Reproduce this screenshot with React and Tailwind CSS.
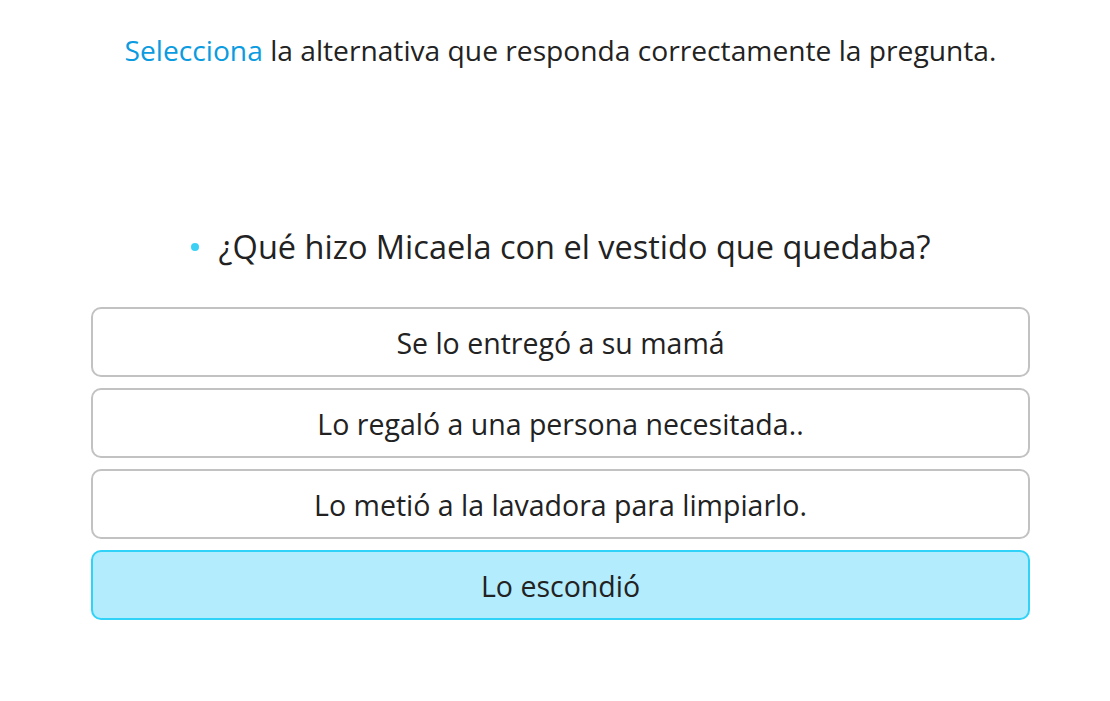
const options = [
  { text: 'Se lo entregó a su mamá', selected: false },
  { text: 'Lo regaló a una persona necesitada..', selected: false },
  { text: 'Lo metió a la lavadora para limpiarlo.', selected: false },
  { text: 'Lo escondió', selected: true },
];

export default function App() {
  return (
    <div className="min-h-[701px] bg-white pl-[91px] pr-[80px] pt-[30px] text-[#222]" style={{ fontFamily: '"Open Sans", "Noto Sans", sans-serif' }}>
      <p className="text-center text-[28.2px] leading-[40px]">
        <span className="text-[#0a9be0]">Selecciona</span> la alternativa que responda correctamente la pregunta.
      </p>

      <div className="mt-[155px] flex items-center justify-center gap-[20px]">
        <span className="h-[8px] w-[8px] rounded-full bg-[#3dd0f5]"></span>
        <h2 className="text-[32.5px] leading-[44px]">¿Qué hizo Micaela con el vestido que quedaba?</h2>
      </div>

      <div className="mt-[38px] flex flex-col gap-[11px]">
        {options.map((o) => (
          <button
            key={o.text}
            className={`flex h-[70px] w-full items-center justify-center rounded-[10px] pt-[2px] text-[28.5px] ${o.selected ? 'border-[2.5px] border-[#30d2f7] bg-[#b3ecfd]' : 'border-2 border-[#c2c2c2] bg-white'}`}
          >
            {o.text}
          </button>
        ))}
      </div>
    </div>
  );
}
